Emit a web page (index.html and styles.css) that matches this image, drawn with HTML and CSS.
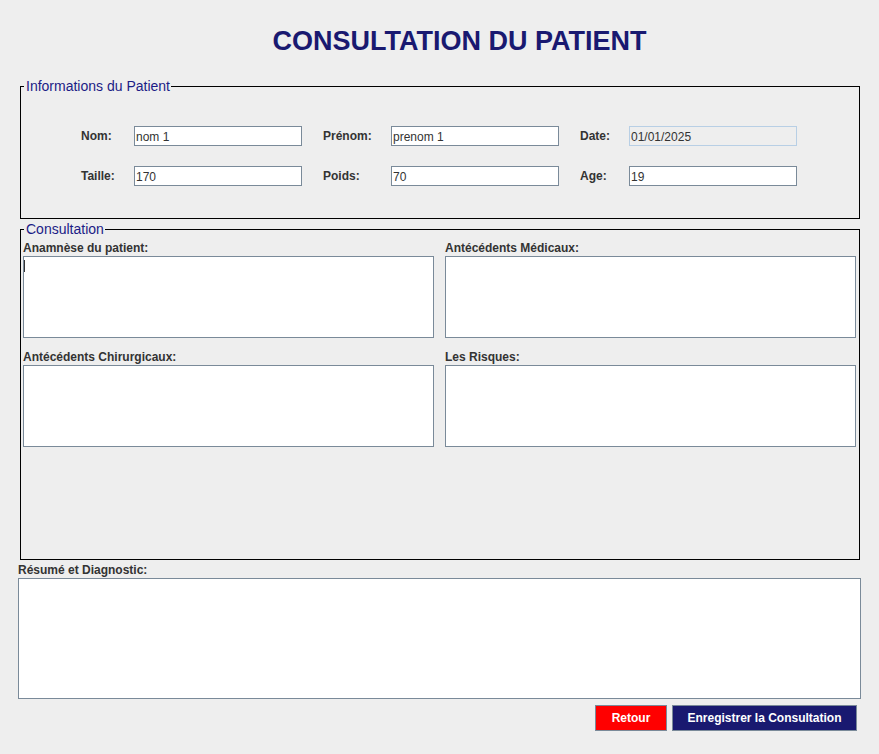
FILE: index.html
```html
<!DOCTYPE html>
<html lang="fr">
<head>
<meta charset="utf-8">
<title>Consultation du Patient</title>
<link rel="stylesheet" href="styles.css">
</head>
<body>
<div class="page">
  <h1 class="title">CONSULTATION DU PATIENT</h1>

  <fieldset class="group">
    <legend class="group-title">Informations du Patient</legend>
    <div class="info-grid">
      <span class="lbl">Nom:</span>
      <input class="field" type="text" value="nom 1">
      <span class="lbl lbl-gap">Prénom:</span>
      <input class="field" type="text" value="prenom 1">
      <span class="lbl lbl-gap">Date:</span>
      <input class="field field-disabled" type="text" value="01/01/2025" readonly>

      <span class="lbl">Taille:</span>
      <input class="field" type="text" value="170">
      <span class="lbl lbl-gap">Poids:</span>
      <input class="field" type="text" value="70">
      <span class="lbl lbl-gap">Age:</span>
      <input class="field" type="text" value="19">
    </div>
  </fieldset>

  <fieldset class="group group-consult">
    <legend class="group-title">Consultation</legend>
    <div class="consult-grid">
      <div class="cell">
        <div class="area-lbl">Anamnèse du patient:</div>
        <div class="area"><span class="caret"></span></div>
      </div>
      <div class="cell">
        <div class="area-lbl">Antécédents Médicaux:</div>
        <div class="area"></div>
      </div>
      <div class="cell">
        <div class="area-lbl">Antécédents Chirurgicaux:</div>
        <div class="area"></div>
      </div>
      <div class="cell">
        <div class="area-lbl">Les Risques:</div>
        <div class="area"></div>
      </div>
    </div>
  </fieldset>

  <div class="resume">
    <div class="area-lbl">Résumé et Diagnostic:</div>
    <div class="area area-big"></div>
  </div>

  <div class="actions">
    <button class="btn btn-back" type="button">Retour</button>
    <button class="btn btn-save" type="button">Enregistrer la Consultation</button>
  </div>
</div>
</body>
</html>
```

FILE: styles.css
```css
* {
  box-sizing: border-box;
}

html, body {
  margin: 0;
  padding: 0;
  background: #eeeeee;
}

body {
  font-family: "Liberation Sans", Arial, sans-serif;
  color: #333333;
  width: 879px;
  height: 754px;
  overflow: hidden;
}

.page {
  display: flex;
  flex-direction: column;
}

.title {
  margin: 26px 0 0 0;
  padding-left: 40px;
  height: 30px;
  line-height: 30px;
  font-size: 27px;
  font-weight: bold;
  color: #191970;
  text-align: center;
}

.group {
  margin: 22px 19px 0 20px;
  padding: 0;
  border: 1px solid #000000;
  min-width: 0;
}

.group-consult {
  margin-top: 2px;
}

.group-title {
  margin-left: 3px;
  padding: 0 1px 0 2px;
  font-size: 14px;
  line-height: 16px;
  height: 16px;
  color: #1c1c86;
}

.info-grid {
  display: grid;
  grid-template-columns: 53px 168px 89px 168px 70px 168px;
  grid-auto-rows: 20px;
  row-gap: 20px;
  padding: 32px 0 32px 60px;
}

.lbl {
  font-size: 12px;
  font-weight: bold;
  line-height: 20px;
  color: #333333;
}

.lbl-gap {
  padding-left: 21px;
}

.field {
  width: 168px;
  height: 20px;
  margin: 0;
  padding: 1px 1px 0 1px;
  border: 1px solid #7a8a99;
  background: #ffffff;
  font-family: "Liberation Sans", Arial, sans-serif;
  font-size: 12px;
  color: #333333;
  outline: none;
}

.field-disabled {
  background: #eeeeee;
  border-color: #b8cfe5;
}

.consult-grid {
  display: grid;
  grid-template-columns: 411px 411px;
  column-gap: 11px;
  row-gap: 11px;
  padding: 3px 3px 112px 2px;
}

.cell {
  display: flex;
  flex-direction: column;
}

.area-lbl {
  height: 16px;
  line-height: 16px;
  font-size: 12px;
  font-weight: bold;
  color: #333333;
}

.area {
  height: 82px;
  border: 1px solid #7a8a99;
  background: #ffffff;
}

.caret {
  display: block;
  width: 1px;
  height: 12px;
  margin-top: 3px;
  background: #333333;
}

.resume {
  margin: 2px 0 0 18px;
  width: 843px;
  display: flex;
  flex-direction: column;
}

.area-big {
  height: 121px;
}

.actions {
  display: flex;
  justify-content: flex-end;
  gap: 5px;
  margin-top: 6px;
  padding-right: 22px;
}

.btn {
  height: 26px;
  margin: 0;
  padding: 0;
  border: 1px solid #7a8a99;
  font-family: "Liberation Sans", Arial, sans-serif;
  font-size: 12px;
  font-weight: bold;
  color: #ffffff;
}

.btn-back {
  width: 72px;
  background: #ff0000;
}

.btn-save {
  width: 185px;
  background: #191970;
}
```
